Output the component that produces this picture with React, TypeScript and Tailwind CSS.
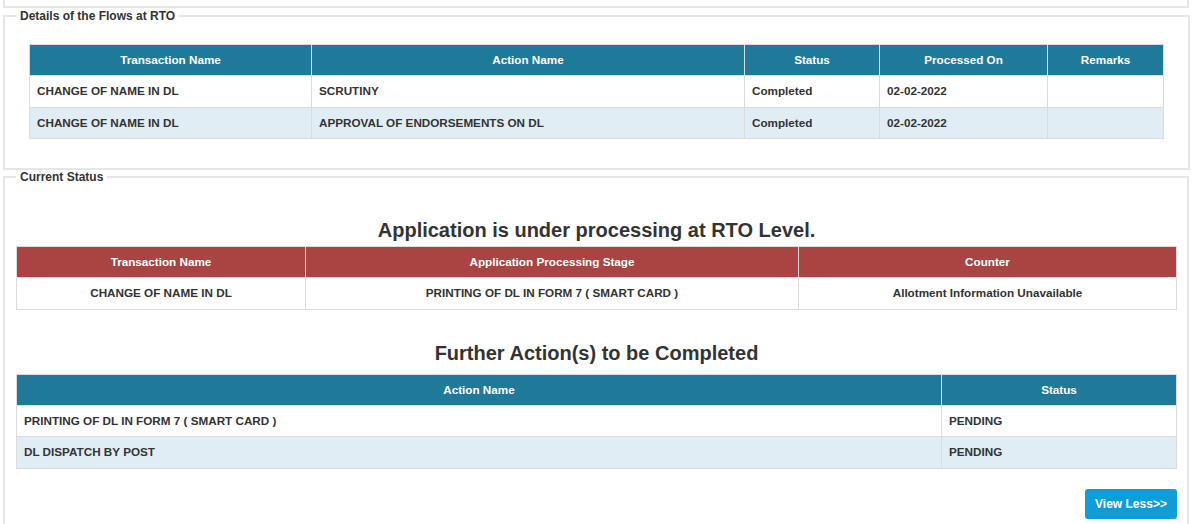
import React from 'react';

const flows = [
  { txn: 'CHANGE OF NAME IN DL', action: 'SCRUTINY', status: 'Completed', on: '02-02-2022', remarks: '' },
  { txn: 'CHANGE OF NAME IN DL', action: 'APPROVAL OF ENDORSEMENTS ON DL', status: 'Completed', on: '02-02-2022', remarks: '' },
];

const further = [
  { action: 'PRINTING OF DL IN FORM 7 ( SMART CARD )', status: 'PENDING' },
  { action: 'DL DISPATCH BY POST', status: 'PENDING' },
];

const th = 'h-[31px] border border-[#dcdcdc] text-center text-[11.7px] font-bold text-white';
const td = 'h-[31.5px] border border-[#dcdcdc] px-[7px] text-[11.7px] font-bold text-[#333]';

export default function App() {
  return (
    <div className="min-h-screen bg-white font-['Liberation_Sans',Arial,sans-serif] text-[#333]">
      <div className="ml-[3px] w-[1186px]">
        {/* previous panel, cut off at the top */}
        <div className="h-[8px] border-x-2 border-b-2 border-[#e6e6e6]"></div>

        {/* Details of the Flows at RTO */}
        <fieldset className="mt-[1px] h-[161px] border-2 border-[#e6e6e6]">
          <legend className="ml-[11px] px-[4px] text-[12px] leading-[14px] font-bold">Details of the Flows at RTO</legend>
          <div className="px-[24px] pt-[21px]">
            <table className="w-[1134px] table-fixed border-collapse">
              <colgroup>
                <col className="w-[282px]" />
                <col className="w-[433px]" />
                <col className="w-[135px]" />
                <col className="w-[168px]" />
                <col className="w-[116px]" />
              </colgroup>
              <thead>
                <tr className="bg-[#1f7a99]">
                  <th className={th}>Transaction Name</th>
                  <th className={th}>Action Name</th>
                  <th className={th}>Status</th>
                  <th className={th}>Processed On</th>
                  <th className={th}>Remarks</th>
                </tr>
              </thead>
              <tbody>
                {flows.map((f, i) => (
                  <tr key={i} className={i % 2 ? 'bg-[#e1edf4]' : 'bg-white'}>
                    <td className={td}>{f.txn}</td>
                    <td className={td}>{f.action}</td>
                    <td className={td}>{f.status}</td>
                    <td className={td}>{f.on}</td>
                    <td className={td}>{f.remarks}</td>
                  </tr>
                ))}
              </tbody>
            </table>
          </div>
        </fieldset>

        {/* Current Status */}
        <fieldset className="h-[400px] border-2 border-[#e6e6e6]">
          <legend className="ml-[11px] px-[4px] text-[12px] leading-[14px] font-bold">Current Status</legend>
          <div className="pl-[11px] pr-[10px]">
            <h2 className="mt-[34px] text-center text-[20px] leading-[24px] font-bold text-[#333]">
              Application is under processing at RTO Level.
            </h2>
            <table className="mt-[4px] w-[1160px] table-fixed border-collapse">
              <colgroup>
                <col className="w-[289px]" />
                <col className="w-[493px]" />
                <col className="w-[378px]" />
              </colgroup>
              <thead>
                <tr className="bg-[#a94442]">
                  <th className={th}>Transaction Name</th>
                  <th className={th}>Application Processing Stage</th>
                  <th className={th}>Counter</th>
                </tr>
              </thead>
              <tbody>
                <tr className="bg-white">
                  <td className={`${td} text-center`}>CHANGE OF NAME IN DL</td>
                  <td className={`${td} text-center`}>PRINTING OF DL IN FORM 7 ( SMART CARD )</td>
                  <td className={`${td} text-center`}>Allotment Information Unavailable</td>
                </tr>
              </tbody>
            </table>

            <h2 className="mt-[31px] text-center text-[20px] leading-[24px] font-bold text-[#333]">
              Further Action(s) to be Completed
            </h2>
            <table className="mt-[9px] w-[1160px] table-fixed border-collapse">
              <colgroup>
                <col className="w-[925px]" />
                <col className="w-[235px]" />
              </colgroup>
              <thead>
                <tr className="bg-[#1f7a99]">
                  <th className={th}>Action Name</th>
                  <th className={th}>Status</th>
                </tr>
              </thead>
              <tbody>
                {further.map((r, i) => (
                  <tr key={i} className={i % 2 ? 'bg-[#e1edf4]' : 'bg-white'}>
                    <td className={td}>{r.action}</td>
                    <td className={td}>{r.status}</td>
                  </tr>
                ))}
              </tbody>
            </table>

            <div className="mt-[20px] flex justify-end">
              <button className="h-[30px] w-[92px] rounded-[3px] bg-[#0f9dd9] text-[12px] font-bold text-white">
                View Less&gt;&gt;
              </button>
            </div>
          </div>
        </fieldset>
      </div>
    </div>
  );
}
